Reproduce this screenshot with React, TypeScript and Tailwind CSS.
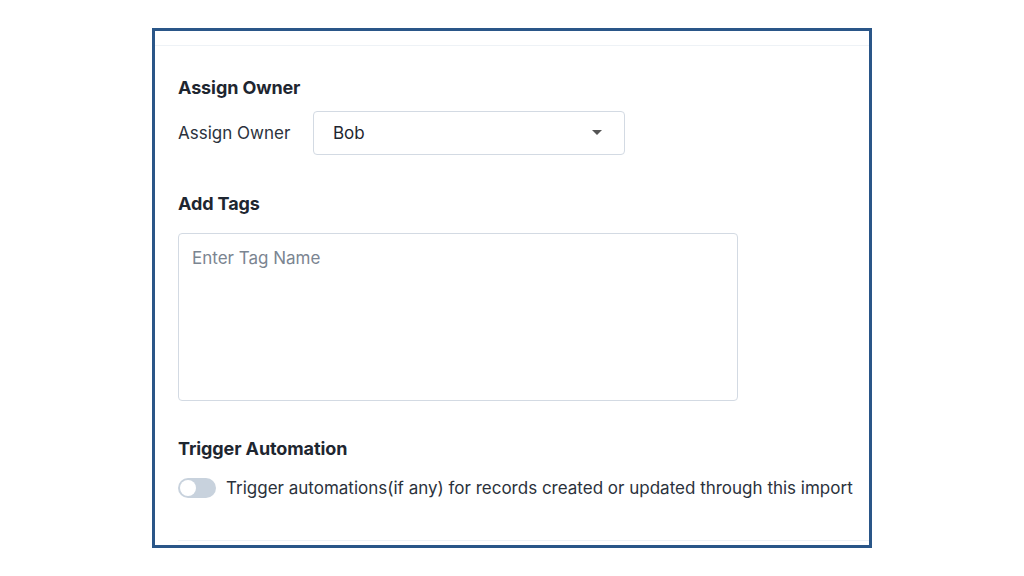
import React from "react";

export default function App() {
  return (
    <div className="w-[1024px] h-[576px] bg-white overflow-hidden" style={{ fontFamily: "Inter, 'Noto Sans', sans-serif" }}>
      <div className="ml-[152px] mt-[28px] w-[720px] h-[520px] border-[3px] border-[#2a5688] flex flex-col">
        <div className="h-[15px] border-b border-[#eef2f6]" />
        <div className="pl-[23px] flex flex-col flex-1">
          <div className="mt-[31px] text-[18px] font-bold text-[#1e2630] leading-[22px] tracking-[-0.1px]">Assign Owner</div>
          <div className="mt-[12px] flex items-center">
            <div className="w-[135px] text-[17px] text-[#2b323c] leading-[22px]">Assign Owner</div>
            <div className="w-[312px] h-[44px] border border-[#d3dae3] rounded-[4px] flex items-center justify-between pl-[19px] pr-[22px]">
              <span className="text-[17px] text-[#1e2630] leading-[22px]">Bob</span>
              <svg width="10" height="6" viewBox="0 0 10 6"><path d="M0 0 L10 0 L5 5 Z" fill="#555" /></svg>
            </div>
          </div>
          <div className="mt-[38px] text-[18px] font-bold text-[#1e2630] leading-[22px] tracking-[-0.1px]">Add Tags</div>
          <div className="mt-[18px] w-[560px] h-[168px] border border-[#d3dae3] rounded-[4px] px-[13px] pt-[12px]">
            <span className="text-[17px] text-[#7b8591] leading-[22px]">Enter Tag Name</span>
          </div>
          <div className="mt-[37px] text-[18px] font-bold text-[#1e2630] leading-[22px] tracking-[-0.1px]">Trigger Automation</div>
          <div className="mt-[17px] h-[22px] flex items-center">
            <div className="w-[38px] h-[20px] rounded-full bg-[#c8d2dd] flex items-center pl-[2px]">
              <div className="w-[16px] h-[16px] rounded-full bg-white" />
            </div>
            <span className="ml-[10px] text-[17px] text-[#2b323c] leading-[22px]">Trigger automations(if any) for records created or updated through this import</span>
          </div>
          <div className="flex-1" />
          <div className="mb-[4px] border-b border-[#eef2f6]" />
        </div>
      </div>
    </div>
  );
}
